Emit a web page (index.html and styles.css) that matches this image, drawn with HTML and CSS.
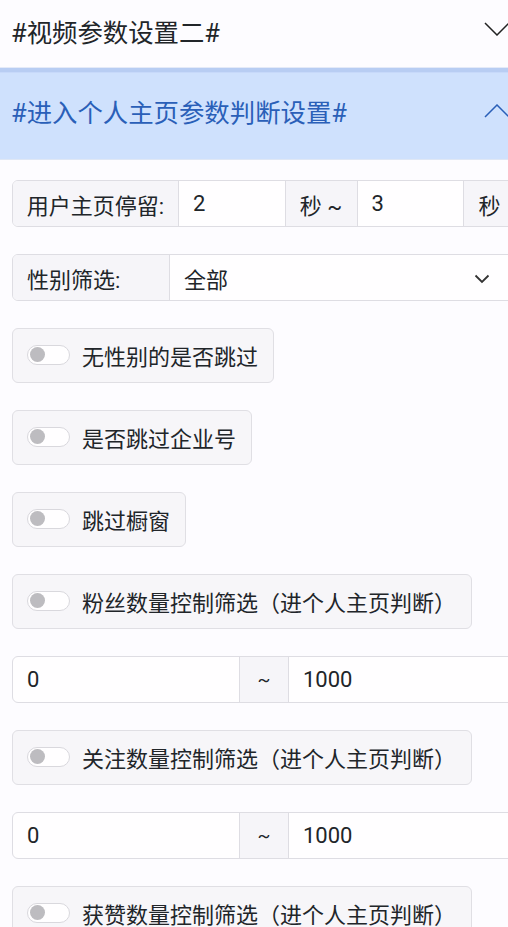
FILE: index.html
```html
<!DOCTYPE html>
<html lang="zh">
<head>
<meta charset="utf-8">
<link rel="stylesheet" href="styles.css">
</head>
<body>
<div class="page">
  <div class="acc-head">
    <span class="acc-title">#视频参数设置二#</span>
    <svg class="chev" viewBox="0 0 26 14" width="26" height="14"><path d="M1 1 L13 13 L25 1" fill="none" stroke="#222" stroke-width="1.5"/></svg>
  </div>
  <div class="acc-head active">
    <span class="acc-title">#进入个人主页参数判断设置#</span>
    <svg class="chev" viewBox="0 0 26 14" width="26" height="14"><path d="M1 13 L13 1 L25 13" fill="none" stroke="#2a5fb8" stroke-width="1.5"/></svg>
  </div>
  <div class="acc-body">
    <div class="group">
      <span class="addon w-label">用户主页停留:</span>
      <span class="field">2</span>
      <span class="addon w-sep">秒 ~</span>
      <span class="field">3</span>
      <span class="addon w-unit">秒</span>
    </div>
    <div class="group">
      <span class="addon w-sel">性别筛选:</span>
      <span class="field select">全部
        <svg class="sel-chev" viewBox="0 0 16 10" width="16" height="10"><path d="M1.5 1.5 L8 8 L14.5 1.5" fill="none" stroke="#333" stroke-width="1.8"/></svg>
      </span>
    </div>
    <div class="card"><span class="switch"><span class="knob"></span></span><span>无性别的是否跳过</span></div>
    <div class="card"><span class="switch"><span class="knob"></span></span><span>是否跳过企业号</span></div>
    <div class="card"><span class="switch"><span class="knob"></span></span><span>跳过橱窗</span></div>
    <div class="card"><span class="switch"><span class="knob"></span></span><span>粉丝数量控制筛选（进个人主页判断）</span></div>
    <div class="group">
      <span class="field">0</span>
      <span class="addon w-tilde">~</span>
      <span class="field">1000</span>
    </div>
    <div class="card"><span class="switch"><span class="knob"></span></span><span>关注数量控制筛选（进个人主页判断）</span></div>
    <div class="group">
      <span class="field">0</span>
      <span class="addon w-tilde">~</span>
      <span class="field">1000</span>
    </div>
    <div class="card"><span class="switch"><span class="knob"></span></span><span>获赞数量控制筛选（进个人主页判断）</span></div>
  </div>
</div>
</body>
</html>
```
FILE: styles.css
```css
html, body {
  margin: 0;
  padding: 0;
  overflow: hidden;
  background: #fdfcff;
}
body {
  font-family: Roboto, "Noto Sans CJK SC", sans-serif;
  color: #212529;
}
.page {
  width: 540px;
}
.acc-head {
  height: 67px;
  display: flex;
  align-items: center;
  padding: 0 0 6px 11px;
  box-sizing: border-box;
  font-size: 25.4px;
  position: relative;
}
.acc-title { flex: 1; }
.chev { margin-right: 30px; margin-bottom: 3px; }
.acc-head.active {
  height: 93px;
  padding-top: 0;
  padding-bottom: 4px;
  background: #cfe1fd;
  color: #2a5fb8;
  box-shadow: inset 0 1px 0 #e4eaf8, inset 0 5px 0 #b8cdf3, inset 0 6px 0 #c7d9fa;
  border-bottom: 1px solid #dfe7f5;
}
.active .chev { margin-bottom: 0; }
.acc-body {
  padding: 20px 0 0 12px;
  width: 504px;
  display: flex;
  flex-direction: column;
  align-items: flex-start;
  gap: 27px;
  font-size: 22px;
}
.group {
  display: flex;
  width: 504px;
  height: 47px;
  box-sizing: border-box;
  border: 1px solid #dedde3;
  border-radius: 6px;
  background: #fffeff;
  overflow: hidden;
}
.addon {
  background: #f6f5f9;
  display: flex;
  align-items: center;
  justify-content: center;
  box-sizing: border-box;
  flex: none;
}
.addon + .field, .field + .addon { border-left: 1px solid #dedde3; }
.w-label { width: 165px; }
.w-sep { width: 72px; }
.w-unit { width: 52px; }
.w-sel { width: 156px; justify-content: flex-start; padding-left: 14px; }
.w-tilde { width: 49px; font-size: 19px; }
.field {
  flex: 1;
  display: flex;
  align-items: center;
  padding-left: 14px;
}
.select {
  padding-left: 14px;
  justify-content: space-between;
  padding-right: 25px;
}
.sel-chev { margin-top: 2px; }
.card {
  display: flex;
  align-items: center;
  gap: 12px;
  height: 55px;
  box-sizing: border-box;
  padding: 0 15px 2px 14px;
  background: #f7f6f9;
  border: 1px solid #e0dfe4;
  border-radius: 6px;
}
.switch {
  width: 43px;
  height: 20px;
  box-sizing: border-box;
  border: 1px solid #d9d8dd;
  border-radius: 10px;
  background: #fffeff;
  display: flex;
  align-items: center;
  padding-left: 2px;
}
.knob {
  width: 15px;
  height: 15px;
  border-radius: 50%;
  background: #bdbcc0;
}
```
